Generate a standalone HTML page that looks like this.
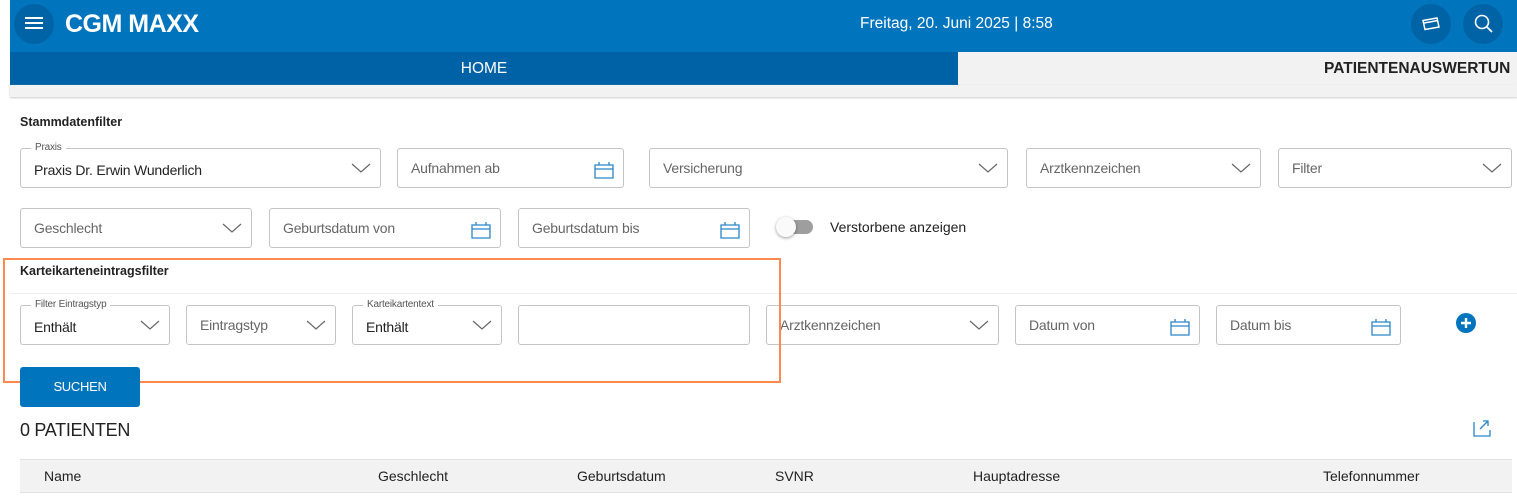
<!DOCTYPE html>
<html><head><meta charset="utf-8"><style>
*{box-sizing:border-box;margin:0;padding:0}
body{width:1517px;height:496px;overflow:hidden;background:#fff;font-family:"Liberation Sans",sans-serif;position:relative;color:#222}
.a{position:absolute}
.hdr{left:10px;top:0;width:1507px;height:52px;background:#0074bd}
.circ{border-radius:50%;background:#0063a6;width:40px;height:40px}
.f{position:absolute;height:40px;border:1px solid #c4c4c4;border-radius:3px;background:#fff}
.f span{position:absolute;left:13px;top:11px;font-size:14px;color:#666;letter-spacing:-0.2px}
.f span.v{color:#222;top:13px}
.f .lbl{position:absolute;left:10px;top:-7px;font-size:10px;color:#555;background:#fff;padding:0 4px;letter-spacing:-0.2px}
.f svg{position:absolute;right:9px;top:12px}
.h{font-size:12.5px;font-weight:bold;color:#222}
.th{position:absolute;top:468px;font-size:14px;color:#222}
</style></head><body>
<div class="a hdr"></div>
<div class="a circ" style="left:14px;top:4px"></div>
<svg class="a" style="left:25px;top:16px" width="18" height="14"><path d="M0 2H18M0 7H18M0 12H18" stroke="#fff" stroke-width="2"/></svg>
<div class="a" style="left:65px;top:10px;color:#fff;font-size:25px;font-weight:bold;letter-spacing:-0.5px">CGM MAXX</div>
<div class="a" style="left:860px;top:15px;color:#fff;font-size:15.5px">Freitag, 20. Juni 2025 | 8:58</div>
<div class="a circ" style="left:1411px;top:4px"></div>
<svg class="a" style="left:1421px;top:14px" width="20" height="20"><path d="M2 6.5L16 4L18 13L4 15.5Z M3 9L17 6.5" fill="none" stroke="#fff" stroke-width="1.5"/></svg>
<div class="a circ" style="left:1463px;top:4px"></div>
<svg class="a" style="left:1473px;top:13px" width="22" height="22"><circle cx="9" cy="9" r="6.5" fill="none" stroke="#fff" stroke-width="1.6"/><path d="M13.5 13.5L19 19" stroke="#fff" stroke-width="1.8"/></svg>
<div class="a" style="left:10px;top:52px;width:948px;height:33px;background:#0062a6;color:#fff;font-size:15.5px;text-align:center;line-height:34px">HOME</div>
<div class="a" style="left:958px;top:52px;width:559px;height:33px;background:#f2f2f2;font-size:15.5px;font-weight:bold;line-height:34px;padding-left:366px;white-space:nowrap;color:#222;overflow:hidden">PATIENTENAUSWERTUN</div>
<div class="a" style="left:10px;top:85px;width:1507px;height:12px;background:#f2f2f2;box-shadow:0 1px 2px #ccc"></div>

<div class="a h" style="left:20px;top:115px">Stammdatenfilter</div>
<div class="f" style="left:20px;top:148px;width:361px"><div class="lbl">Praxis</div><span class="v">Praxis Dr. Erwin Wunderlich</span><svg width="20" height="14"><path d="M1 3L10 11L19 3" fill="none" stroke="#666" stroke-width="1.2"/></svg></div>
<div class="f" style="left:397px;top:148px;width:227px"><span>Aufnahmen ab</span><svg width="20" height="18"><path d="M1 4H19V17H1Z M1 8H19 M5 1V4 M15 1V4" fill="none" stroke="#2a86c8" stroke-width="1.3"/></svg></div>
<div class="f" style="left:649px;top:148px;width:359px"><span>Versicherung</span><svg width="20" height="14"><path d="M1 3L10 11L19 3" fill="none" stroke="#666" stroke-width="1.2"/></svg></div>
<div class="f" style="left:1026px;top:148px;width:235px"><span>Arztkennzeichen</span><svg width="20" height="14"><path d="M1 3L10 11L19 3" fill="none" stroke="#666" stroke-width="1.2"/></svg></div>
<div class="f" style="left:1278px;top:148px;width:234px"><span>Filter</span><svg width="20" height="14"><path d="M1 3L10 11L19 3" fill="none" stroke="#666" stroke-width="1.2"/></svg></div>

<div class="f" style="left:20px;top:208px;width:232px"><span>Geschlecht</span><svg width="20" height="14"><path d="M1 3L10 11L19 3" fill="none" stroke="#666" stroke-width="1.2"/></svg></div>
<div class="f" style="left:269px;top:208px;width:232px"><span>Geburtsdatum von</span><svg width="20" height="18"><path d="M1 4H19V17H1Z M1 8H19 M5 1V4 M15 1V4" fill="none" stroke="#2a86c8" stroke-width="1.3"/></svg></div>
<div class="f" style="left:518px;top:208px;width:232px"><span>Geburtsdatum bis</span><svg width="20" height="18"><path d="M1 4H19V17H1Z M1 8H19 M5 1V4 M15 1V4" fill="none" stroke="#2a86c8" stroke-width="1.3"/></svg></div>
<div class="a" style="left:781px;top:220px;width:32px;height:14px;border-radius:7px;background:#9e9e9e"></div>
<div class="a" style="left:776px;top:217px;width:20px;height:20px;border-radius:50%;background:#fafafa;box-shadow:0 1px 3px rgba(0,0,0,.4)"></div>
<div class="a" style="left:830px;top:219px;font-size:14px;color:#222">Verstorbene anzeigen</div>

<div class="a h" style="left:20px;top:264px">Karteikarteneintragsfilter</div>
<div class="a" style="left:10px;top:293px;width:1507px;height:1px;background:#eee"></div>
<div class="f" style="left:20px;top:305px;width:150px"><div class="lbl">Filter Eintragstyp</div><span class="v">Enthält</span><svg width="20" height="14"><path d="M1 3L10 11L19 3" fill="none" stroke="#666" stroke-width="1.2"/></svg></div>
<div class="f" style="left:186px;top:305px;width:150px"><span>Eintragstyp</span><svg width="20" height="14"><path d="M1 3L10 11L19 3" fill="none" stroke="#666" stroke-width="1.2"/></svg></div>
<div class="f" style="left:352px;top:305px;width:150px"><div class="lbl">Karteikartentext</div><span class="v">Enthält</span><svg width="20" height="14"><path d="M1 3L10 11L19 3" fill="none" stroke="#666" stroke-width="1.2"/></svg></div>
<div class="f" style="left:518px;top:305px;width:232px"></div>
<div class="f" style="left:766px;top:305px;width:233px"><span>Arztkennzeichen</span><svg width="20" height="14"><path d="M1 3L10 11L19 3" fill="none" stroke="#666" stroke-width="1.2"/></svg></div>
<div class="f" style="left:1015px;top:305px;width:185px"><span>Datum von</span><svg width="20" height="18"><path d="M1 4H19V17H1Z M1 8H19 M5 1V4 M15 1V4" fill="none" stroke="#2a86c8" stroke-width="1.3"/></svg></div>
<div class="f" style="left:1216px;top:305px;width:185px"><span>Datum bis</span><svg width="20" height="18"><path d="M1 4H19V17H1Z M1 8H19 M5 1V4 M15 1V4" fill="none" stroke="#2a86c8" stroke-width="1.3"/></svg></div>
<svg class="a" style="left:1456px;top:313px" width="20" height="20"><circle cx="10" cy="10" r="10" fill="#0074bd"/><path d="M10 5V15M5 10H15" stroke="#fff" stroke-width="2.4"/></svg>

<div class="a" style="left:3px;top:258px;width:778px;height:125px;border:2px solid #ff8a50"></div>
<div class="a" style="left:20px;top:367px;width:120px;height:40px;background:#0074bd;border-radius:3px;color:#fff;font-size:13px;text-align:center;line-height:40px;letter-spacing:-0.3px">SUCHEN</div>
<div class="a" style="left:20px;top:420px;font-size:18px;color:#222;letter-spacing:-0.3px">0 PATIENTEN</div>
<svg class="a" style="left:1472px;top:418px" width="20" height="20"><path d="M2 4V18H18V12 M8 11L16 3 M11 3H16V8" fill="none" stroke="#2a86c8" stroke-width="1.3"/></svg>

<div class="a" style="left:20px;top:459px;width:1492px;height:34px;background:#f2f2f2;border-top:1px solid #e0e0e0;border-bottom:1px solid #e0e0e0"></div>
<div class="th" style="left:44px">Name</div>
<div class="th" style="left:378px">Geschlecht</div>
<div class="th" style="left:577px">Geburtsdatum</div>
<div class="th" style="left:775px">SVNR</div>
<div class="th" style="left:973px">Hauptadresse</div>
<div class="th" style="left:1323px">Telefonnummer</div>
</body></html>
